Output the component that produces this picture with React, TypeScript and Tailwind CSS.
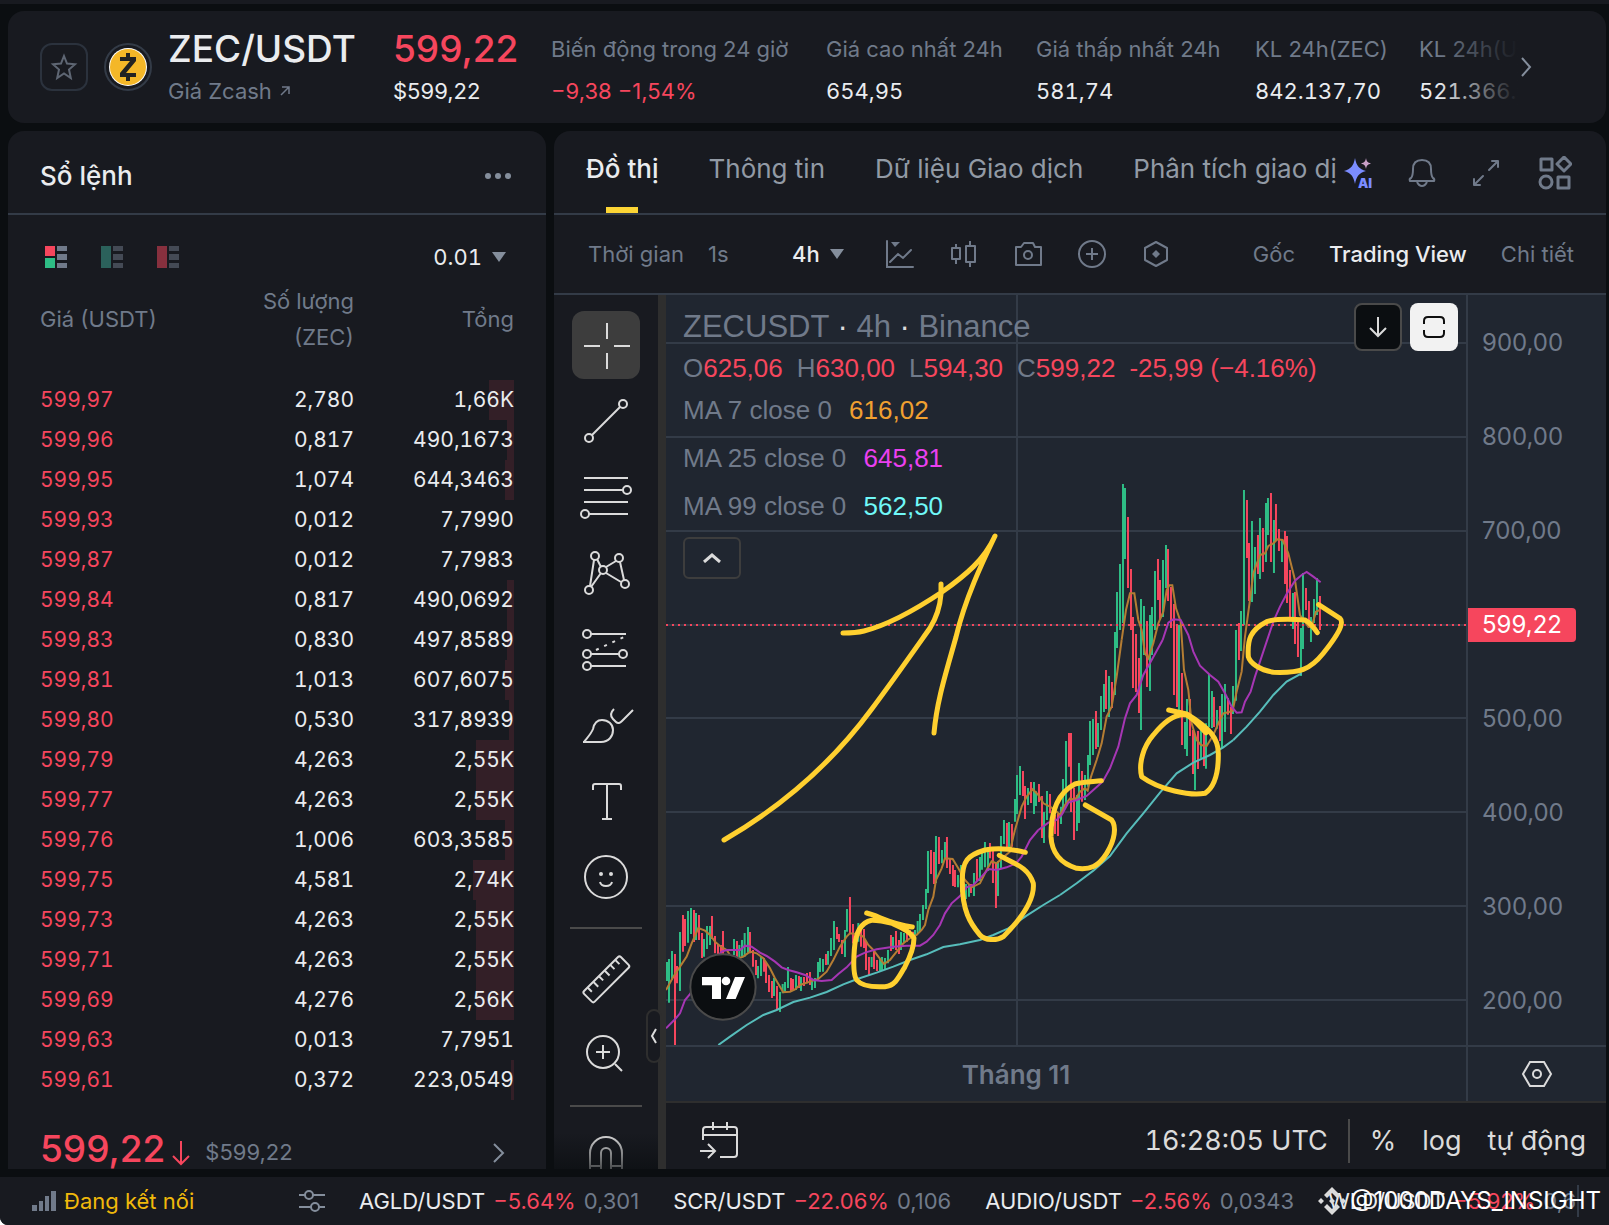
import type { ReactNode } from "react";
import clsx from "clsx";

const stats = [
  { label: "Biến động trong 24 giờ", value: "−9,38 −1,54%", down: true, width: "w-[275px]" },
  { label: "Giá cao nhất 24h", value: "654,95", width: "w-[210px]" },
  { label: "Giá thấp nhất 24h", value: "581,74", width: "w-[219px]" },
  { label: "KL 24h(ZEC)", value: "842.137,70", width: "w-[164px]" },
  { label: "KL 24h(USDT)", value: "521.366.034,20", width: "w-[180px]" },
];

// depth is the width of the red bar behind the total
const asks = [
  { price: "599,97", amount: "2,780", total: "1,66K", depth: 25 },
  { price: "599,96", amount: "0,817", total: "490,1673", depth: 7 },
  { price: "599,95", amount: "1,074", total: "644,3463", depth: 9 },
  { price: "599,93", amount: "0,012", total: "7,7990", depth: 0 },
  { price: "599,87", amount: "0,012", total: "7,7983", depth: 0 },
  { price: "599,84", amount: "0,817", total: "490,0692", depth: 7 },
  { price: "599,83", amount: "0,830", total: "497,8589", depth: 7 },
  { price: "599,81", amount: "1,013", total: "607,6075", depth: 9 },
  { price: "599,80", amount: "0,530", total: "317,8939", depth: 5 },
  { price: "599,79", amount: "4,263", total: "2,55K", depth: 38 },
  { price: "599,77", amount: "4,263", total: "2,55K", depth: 38 },
  { price: "599,76", amount: "1,006", total: "603,3585", depth: 9 },
  { price: "599,75", amount: "4,581", total: "2,74K", depth: 41 },
  { price: "599,73", amount: "4,263", total: "2,55K", depth: 38 },
  { price: "599,71", amount: "4,263", total: "2,55K", depth: 38 },
  { price: "599,69", amount: "4,276", total: "2,56K", depth: 38 },
  { price: "599,63", amount: "0,013", total: "7,7951", depth: 0 },
  { price: "599,61", amount: "0,372", total: "223,0549", depth: 3 },
];

const tickers = [
  { pair: "AGLD/USDT", change: "−5.64%", price: "0,301" },
  { pair: "SCR/USDT", change: "−22.06%", price: "0,106" },
  { pair: "AUDIO/USDT", change: "−2.56%", price: "0,0343" },
  { pair: "WLD/USDT", change: "−5.92%", price: "0,6" },
];

const priceTicks = ["900,00", "800,00", "700,00", "", "500,00", "400,00", "300,00", "200,00"];
const gridLines = [48, 142, 236, 330, 423, 517, 611, 705];

// Each section keeps its own origin; bars are [x, high, low] in thirds of a pixel.
const sections = [
  {
    transform: "translate(-6 505) scale(0.3333)",
    up: [
      [21, 486, 543], [27, 477, 608], [36, 453, 540], [60, 396, 573], [84, 333, 428], [93, 324, 402], [108, 339, 420],
      [132, 417, 470], [141, 378, 447], [150, 378, 435], [222, 417, 465], [238, 435, 480], [246, 420, 470],
      [254, 399, 470], [264, 381, 458], [294, 498, 535], [303, 471, 528], [342, 534, 588], [360, 576, 636],
      [368, 552, 580], [375, 546, 576], [384, 501, 564], [408, 525, 570], [423, 531, 573], [456, 540, 570],
      [465, 534, 564], [474, 486, 540], [480, 474, 516], [489, 477, 515], [504, 453, 494], [513, 414, 468],
      [522, 363, 450], [555, 390, 471], [561, 327, 395], [595, 369, 425], [635, 471, 501], [660, 477, 516],
      [666, 471, 510], [675, 474, 507], [684, 450, 490], [699, 411, 447], [723, 396, 450], [732, 399, 430],
      [765, 390, 410], [773, 363, 402], [780, 342, 396], [789, 315, 360], [798, 267, 327], [804, 153, 279],
      [828, 108, 249], [846, 150, 190], [855, 126, 178], [894, 225, 262], [903, 195, 275], [918, 252, 297],
      [927, 252, 290], [942, 219, 288], [960, 171, 243], [966, 150, 209], [975, 126, 202], [984, 141, 213],
      [1014, 183, 288], [1023, 108, 207], [1032, 60, 132], [1047, 66, 142],
    ],
    down: [
      [45, 462, 735], [51, 498, 550], [69, 345, 455], [75, 357, 438], [102, 330, 426], [117, 345, 420],
      [126, 399, 474], [156, 348, 417], [165, 408, 460], [174, 432, 465], [183, 435, 465], [189, 393, 465],
      [231, 423, 480], [270, 396, 460], [279, 450, 500], [288, 480, 525], [312, 474, 515], [318, 486, 549],
      [327, 525, 576], [336, 543, 594], [351, 558, 630], [393, 534, 573], [399, 537, 573], [417, 528, 564],
      [432, 531, 558], [441, 519, 550], [450, 516, 555], [498, 462, 495], [531, 381, 417], [537, 402, 426],
      [546, 420, 462], [570, 291, 402], [579, 372, 430], [588, 400, 430], [603, 375, 440], [612, 387, 444],
      [618, 423, 510], [627, 471, 525], [642, 447, 507], [651, 480, 513], [693, 405, 453], [708, 393, 450],
      [717, 420, 462], [741, 400, 425], [750, 390, 410], [759, 395, 425], [813, 150, 222], [822, 156, 252],
      [837, 111, 192], [861, 111, 204], [870, 177, 222], [879, 195, 258], [885, 210, 261], [912, 250, 285],
      [933, 252, 279], [951, 177, 243], [990, 129, 175], [999, 150, 249], [1008, 189, 324], [1041, 69, 141],
      [1056, 72, 140],
    ],
    ma7: "18,570 40,530 60,500 80,470 95,430 115,384 135,392 150,405 165,425 180,438 200,450 220,480 250,470 270,455 290,460 310,475 330,505 345,535 360,560 370,577 390,575 405,568 420,555 450,545 475,537 500,515 520,480 540,440 560,410 570,400 590,402 610,410 625,435 640,450 655,470 672,492 690,480 710,455 730,430 750,415 770,405 785,390 795,375 805,330 820,290 828,240 845,205 855,175 878,177 895,205 915,240 935,262 960,250 980,210 995,184 1010,190 1030,172 1050,155 1060,110 1065,90",
    ma25: "18,685 45,658 60,640 75,600 88,585 130,520 185,455 200,450 240,450 255,437 275,440 300,458 320,468 345,485 365,502 385,510 410,517 435,525 460,540 485,543 515,540 535,522 560,502 590,470 615,458 650,448 700,440 740,437 780,437 800,425 820,405 840,375 855,340 875,310 900,288 920,262 940,255 965,230 985,207 1010,210 1040,202 1068,190 1085,170 1110,120 1135,90",
    ma99: "175,735 210,710 260,675 310,645 350,630 400,606 450,593 500,576 550,553 590,538 650,518 700,500 750,480 800,463 850,441 900,433 960,420 1000,405 1045,385 1100,347 1150,315 1200,285",
  },
  {
    transform: "translate(294 345) scale(0.3333)",
    up: [
      [165, 477, 545], [171, 405, 522], [180, 378, 465], [204, 444, 495], [222, 426, 522], [228, 454, 498],
      [252, 516, 609], [261, 453, 540], [303, 500, 552], [309, 417, 520], [318, 303, 490], [351, 465, 573],
      [357, 369, 549], [375, 405, 480], [384, 345, 440], [390, 243, 375], [399, 237, 345], [414, 249, 321],
      [423, 168, 270], [432, 132, 216], [447, 108, 231],
    ],
    down: [
      [189, 393, 468], [195, 438, 537], [213, 426, 489], [237, 432, 486], [246, 468, 594], [270, 462, 520],
      [285, 525, 582], [294, 522, 588], [327, 279, 380], [333, 279, 516], [342, 443, 600], [366, 393, 485],
      [408, 213, 327], [438, 90, 207], [456, 126, 204],
    ],
    ma7: "165,570 175,535 185,500 200,470 218,448 235,465 250,490 270,500 285,510 300,525 315,495 330,475 345,480 360,455 375,445 383,452 393,410 410,360 425,310 440,230 455,200 470,110 485,0",
    ma25: "235,570 265,548 290,540 305,525 325,488 350,480 380,468 400,450 428,425 450,385 475,320 495,235 510,190 530,165 550,105 575,60 608,0",
    ma99: "300,765 350,730 400,692 450,648 500,580 550,520 600,458 650,400 700,368 750,345 790,322 820,300",
  },
  {
    transform: "translate(374 145) scale(0.3333)",
    up: [
      [225, 576, 765], [231, 456, 624], [240, 372, 570], [249, 132, 549], [255, 144, 357], [303, 477, 870],
      [312, 498, 645], [330, 525, 753], [336, 501, 645], [345, 393, 570], [369, 360, 531], [378, 315, 444],
      [417, 555, 822], [435, 846, 927], [441, 777, 948], [465, 882, 1050], [483, 860, 955], [498, 850, 986],
      [507, 702, 862], [516, 753, 864], [531, 810, 866], [546, 762, 924], [555, 732, 876], [579, 738, 822],
      [588, 570, 782], [603, 513, 633], [612, 150, 555], [636, 243, 486], [645, 321, 462], [660, 234, 417],
      [678, 189, 366], [684, 174, 285], [702, 240, 399], [726, 300, 366], [759, 459, 567], [783, 564, 708],
      [789, 399, 627], [813, 531, 606], [822, 477, 549], [831, 414, 525],
    ],
    down: [
      [264, 231, 444], [273, 387, 570], [279, 531, 744], [288, 582, 756], [297, 654, 819], [321, 543, 741],
      [354, 357, 480], [360, 420, 540], [384, 327, 483], [393, 441, 564], [402, 492, 765], [411, 555, 801],
      [426, 699, 915], [450, 777, 888], [459, 870, 1002], [474, 873, 987], [492, 867, 978], [522, 771, 861],
      [540, 798, 903], [564, 774, 824], [573, 800, 882], [597, 549, 660], [621, 180, 354], [627, 309, 483],
      [654, 285, 402], [669, 264, 396], [693, 159, 366], [708, 192, 300], [717, 267, 333], [735, 273, 432],
      [741, 288, 489], [750, 390, 534], [765, 456, 612], [774, 540, 651], [798, 444, 510], [807, 483, 564],
      [840, 468, 570],
    ],
    ma7: "245,600 258,510 270,460 283,460 295,540 305,570 315,640 325,655 340,610 355,550 370,515 380,450 388,436 397,436 408,505 422,545 432,690 445,750 455,850 470,900 483,915 500,918 520,885 535,850 550,820 565,817 578,812 590,755 605,695 615,590 630,480 640,400 660,345 675,340 685,318 700,310 712,298 728,300 745,340 765,420 780,525 795,545 805,560 815,560 828,515 840,510",
    ma25: "368,600 385,548 400,538 422,540 445,585 460,635 480,677 510,705 535,725 555,760 575,800 590,818 605,817 615,785 632,755 645,710 665,650 685,590 700,545 720,500 740,462 765,422 785,405 800,396 820,410 842,427",
    ma99: "580,900 620,860 660,815 700,765 740,725 785,700",
  },
];

const barPath = (bars: number[][]) => bars.map(([x, high, low]) => `M${x} ${high}V${low}`).join("");

function ToolIcon({ children }: { children: ReactNode }) {
  return (
    <svg viewBox="-28 -28 56 56" className="size-14" fill="none" stroke="#dbdbdb" strokeWidth="2">
      {children}
    </svg>
  );
}

const drawTools = [
  {
    name: "Crosshair",
    icon: <path d="M1 -22V-6M1 8V24M-22 1H-6M8 1H24" />,
  },
  {
    name: "Trend line",
    icon: (
      <>
        <circle cx="-17" cy="17" r="4" />
        <circle cx="17" cy="-17" r="4" />
        <path d="M-14 14 14 -14" />
      </>
    ),
  },
  {
    name: "Fib retracement",
    icon: (
      <>
        <path d="M-22 -19H22M-22 -7H17M-22 5H22M-17 17H22" />
        <circle cx="21" cy="-7" r="4" />
        <circle cx="-21" cy="17" r="4" />
      </>
    ),
  },
  {
    name: "Pattern",
    icon: (
      <>
        <circle cx="-11" cy="-17" r="4" />
        <circle cx="13" cy="-15" r="4" />
        <circle cx="-3" cy="-3" r="4" />
        <circle cx="19" cy="11" r="4" />
        <circle cx="-17" cy="17" r="4" />
        <path d="M-9 -14 -5 -6M0 -6 10 -12M14 -11 18 7M0 0 15 9M-5 0 -15 14M-12 -13 -16 13" />
      </>
    ),
  },
  {
    name: "Forecast",
    icon: (
      <>
        <circle cx="-19" cy="-15" r="4" />
        <circle cx="-19" cy="5" r="4" />
        <circle cx="17" cy="5" r="4" />
        <circle cx="-19" cy="17" r="4" />
        <path d="M-15 -15H20M-15 5H13M-15 17H20" />
        <path d="M-10 1 18 -12" strokeDasharray="3 6" />
      </>
    ),
  },
  {
    name: "Brush",
    icon: (
      <>
        <path d="M-23 17H-5C3 17 7 11 7 5C7 -1 2 -5 -4 -5C-9 -5 -12 -1 -13 4C-15 9 -19 13 -22 17Z" />
        <path d="M8 -16C4 -12 4 -9 7 -6L10 -3C12 -1 14 -2 16 -4L27 -15" />
      </>
    ),
  },
  {
    name: "Text",
    icon: <path d="M-13 -11V-15Q-13 -17 -11 -17H13Q15 -17 15 -15V-11M1 -17V18M-4 18H6" />,
  },
  {
    name: "Icons",
    icon: (
      <>
        <circle r="21" />
        <circle cx="-5" cy="-3" r="2" fill="#dbdbdb" stroke="none" />
        <circle cx="5" cy="-3" r="2" fill="#dbdbdb" stroke="none" />
        <path d="M-6 5Q-5 9 0 9Q5 9 6 5" />
      </>
    ),
    last: true,
  },
  {
    name: "Measure",
    icon: (
      <g transform="rotate(-45)">
        <rect x="-26" y="-7" width="52" height="15" rx="2" />
        <path d="M-19 -7V-1M-11 -7V0M-3 -7V-1M5 -7V0M13 -7V-1M20 -7V-1" />
      </g>
    ),
  },
  {
    name: "Zoom in",
    icon: (
      <>
        <circle cx="-3" cy="-3" r="16" />
        <path d="M-10 -3H4M-3 -10V4M9 9 16 16" />
      </>
    ),
    last: true,
  },
  {
    name: "Magnet",
    icon: <path d="M-16 20V-4A16 16 0 0 1 16 -4V20M-5 20V-4A5 5 0 0 1 5 -4V20M-16 9H-5M5 9H16" />,
  },
];

function PairHeader() {
  return (
    <header className="flex h-28 shrink-0 items-center overflow-hidden rounded-2xl bg-[#181a20] pl-8">
      <button aria-label="Favorite" className="flex size-12 shrink-0 items-center justify-center rounded-xl border-2 border-[#2b323d]">
        <svg viewBox="0 0 28 28" className="size-7" fill="none" stroke="#5e6673" strokeWidth="2">
          <path d="M14 3 17 10.500 25 11.300 19 16.500 20.800 25 14 20.500 7.200 25 9 16.500 3 11.300 11 10.500Z" />
        </svg>
      </button>
      <svg viewBox="0 0 48 48" className="ml-4 size-12 shrink-0">
        <circle cx="24" cy="24" r="23" fill="none" stroke="#333b47" strokeWidth="2" />
        <circle cx="24" cy="24" r="19" fill="#fff" />
        <circle cx="24" cy="24" r="18" fill="#f4b728" />
        <path d="M16 14H32V18L22 30H32V34H16V30L26 18H16ZM22 10H26V15H22ZM22 33H26V38H22Z" fill="#222" />
      </svg>
      <div className="ml-4 w-[225px] shrink-0 pt-1.5">
        <h1 className="text-[37px] leading-[42px] font-medium">ZEC/USDT</h1>
        <a href="#zcash" className="flex items-center gap-2 text-[22px] leading-[42px] text-[#707a8a]">
          Giá Zcash
          <svg viewBox="0 0 10 10" className="size-2.5" fill="none" stroke="#707a8a" strokeWidth="1.500">
            <path d="M1 9 9 1M2 1H9V8" />
          </svg>
        </a>
      </div>
      <div className="w-[158px] shrink-0 pt-1.5">
        <div className="text-[37px] leading-[42px] font-medium text-[#f6465d]">599,22</div>
        <div className="text-[22px] leading-[42px]">$599,22</div>
      </div>
      <div className="relative flex min-w-0 flex-1 overflow-hidden pt-1.5">
        {stats.map((s) => (
          <div key={s.label} className={clsx("shrink-0 text-[22px] leading-[42px] whitespace-nowrap", s.width)}>
            <div className="text-[#707a8a]">{s.label}</div>
            <div className={s.down ? "text-[#f6465d]" : "tabular-nums"}>{s.value}</div>
          </div>
        ))}
        <div className="absolute inset-y-0 right-0 w-20 bg-linear-to-l from-[#181a20] to-transparent" />
      </div>
      <button aria-label="Next" className="mr-[72px] shrink-0">
        <svg viewBox="0 0 16 24" className="h-6 w-4" fill="none" stroke="#848e9c" strokeWidth="2">
          <path d="M4 3 12 12 4 21" />
        </svg>
      </button>
    </header>
  );
}

function BookIcon({ top, bottom, dim }: { top: string; bottom: string; dim?: boolean }) {
  return (
    <svg viewBox="0 0 22 22" className={clsx("h-[22px] w-[22px]", dim && "opacity-50")}>
      <path d="M0 0H10V10H0Z" fill={top} />
      <path d="M0 12H10V22H0Z" fill={bottom} />
      {dim && <path d="M0 9H10V13H0Z" fill={top} />}
      <path d="M12 0H22V5H12ZM12 8H22V14H12ZM12 17H22V22H12Z" fill="#707a8a" />
    </svg>
  );
}

function OrderBook() {
  return (
    <section className="flex w-[538px] shrink-0 flex-col overflow-hidden rounded-t-2xl bg-[#181a20]">
      <div className="flex h-[84px] shrink-0 items-center justify-between border-b-2 border-[#333b47] px-8 pt-2">
        <h2 className="text-[26px] leading-8 font-medium">Sổ lệnh</h2>
        <button aria-label="More" className="pr-0.5">
          <svg viewBox="0 0 28 6" className="h-1.5 w-7" fill="#848e9c">
            <circle cx="4" cy="3" r="3" />
            <circle cx="14" cy="3" r="3" />
            <circle cx="24" cy="3" r="3" />
          </svg>
        </button>
      </div>
      <div className="flex h-[68px] shrink-0 items-center justify-between px-8 pt-4">
        <div className="flex gap-[34px] pl-[5px]">
          <button aria-label="Order book">
            <BookIcon top="#f6465d" bottom="#2ebd85" />
          </button>
          <button aria-label="Buy orders">
            <BookIcon top="#3fa796" bottom="#3fa796" dim />
          </button>
          <button aria-label="Sell orders">
            <BookIcon top="#f6465d" bottom="#f6465d" dim />
          </button>
        </div>
        <button className="flex items-center gap-2.5 pr-2 text-[22px] tabular-nums">
          0.01
          <svg viewBox="0 0 14 10" className="h-2.5 w-3.5" fill="#848e9c">
            <path d="M0 0H14L7 10Z" />
          </svg>
        </button>
      </div>
      <div className="mx-8 shrink-0">
        <table className="w-full table-fixed text-[22px] tabular-nums">
          <thead>
            <tr className="text-[#707a8a]">
              <th className="w-[160px] pb-[25px] text-left font-normal">Giá (USDT)</th>
              <th className="w-[154px] pb-[25px] text-right leading-9 font-normal">
                Số lượng
                <br />
                (ZEC)
              </th>
              <th className="pb-[25px] text-right font-normal">Tổng</th>
            </tr>
          </thead>
          <tbody className="text-[21px]">
            {asks.map((row) => (
              <tr key={row.price} className="h-10">
                <td className="p-0 text-[#f6465d]">{row.price}</td>
                <td className="p-0 text-right">{row.amount}</td>
                <td className="relative p-0 text-right">
                  <span className="absolute inset-y-0 right-0 bg-[#f6465d]/12" style={{ width: row.depth }} />
                  <span className="relative">{row.total}</span>
                </td>
              </tr>
            ))}
          </tbody>
        </table>
      </div>
      <div className="mt-7 flex items-center px-8">
        <span className="text-[37px] leading-[40px] font-medium text-[#f6465d]">599,22</span>
        <svg viewBox="0 0 20 26" className="mt-2 ml-1.5 h-[26px] w-5" fill="none" stroke="#f6465d" strokeWidth="2">
          <path d="M10 1V24M2 16 10 24 18 16" />
        </svg>
        <span className="mt-2 ml-3.5 text-[22px] text-[#707a8a]">$599,22</span>
        <button aria-label="More trades" className="mt-2 mr-2 ml-auto">
          <svg viewBox="0 0 14 22" className="h-[22px] w-3.5" fill="none" stroke="#848e9c" strokeWidth="2">
            <path d="M2 2 11 11 2 20" />
          </svg>
        </button>
      </div>
    </section>
  );
}

function Tabs() {
  const tabs = ["Đồ thị", "Thông tin", "Dữ liệu Giao dịch", "Phân tích giao dị"];
  return (
    <div className="flex h-[84px] shrink-0 border-b-2 border-[#333b47] pl-8">
      <nav className="flex min-w-0 flex-1 gap-[50px] overflow-hidden text-[26px] whitespace-nowrap">
        {tabs.map((tab, i) => (
          <a
            key={tab}
            href={`#tab-${i}`}
            className={clsx("relative pt-5 leading-9", i === 0 ? "font-medium" : "text-[#929aa5]")}
          >
            {tab}
            {i === 0 && <span className="absolute bottom-0 left-1/2 h-1.5 w-8 -translate-x-1/2 bg-[#fcd535]" />}
          </a>
        ))}
      </nav>
      <div className="flex shrink-0 items-center pt-0.5 pr-[34px]">
        <button aria-label="AI">
          <svg viewBox="0 0 32 32" className="size-8">
            <path d="M13 1C14.500 9 17 12 24 14C17 16 14.500 19 13 27C11.500 19 9 16 2 14C9 12 11.500 9 13 1Z" fill="#7b8cff" />
            <path d="M24 1C24.700 4.500 25.500 5.500 29 6.500C25.500 7.500 24.700 8.500 24 12C23.300 8.500 22.500 7.500 19 6.500C22.500 5.500 23.300 4.500 24 1Z" fill="#c9a0c8" />
            <text x="16" y="31" fill="#7b8cff" className="font-['Inter'] text-[13px] font-black">
              AI
            </text>
          </svg>
        </button>
        <button aria-label="Alerts" className="ml-8">
          <svg viewBox="0 0 32 32" className="size-8" fill="none" stroke="#707a8a" strokeWidth="2" strokeLinejoin="round">
            <path d="M4 24Q3 22 5 21Q7 19 7 12C7 6 10 3 16 3S25 6 25 12Q25 19 27 21Q29 22 28 24ZM11 25Q13 29 16 29T21 25" />
          </svg>
        </button>
        <button aria-label="Expand" className="ml-8">
          <svg
            viewBox="0 0 32 32"
            className="size-8"
            fill="none"
            stroke="#707a8a"
            strokeWidth="2"
            strokeLinecap="round"
            strokeLinejoin="round"
          >
            <path d="M19 13 28 4M22 4H28V10M13 19 4 28M4 22V28H10" />
          </svg>
        </button>
        <button aria-label="Layout" className="ml-9">
          <svg viewBox="0 0 34 34" className="size-[34px]" fill="none" stroke="#707a8a" strokeWidth="3" strokeLinejoin="round">
            <path d="M3 3H14V14H3ZM20 21H31V32H20ZM26 1 33 8 26 15 19 8Z" />
            <circle cx="8" cy="26" r="6" />
          </svg>
        </button>
      </div>
    </div>
  );
}

function ChartToolbar() {
  return (
    <div className="flex h-20 shrink-0 items-center border-b-2 border-[#333b47] pr-8 pl-[34px] text-[22px] whitespace-nowrap text-[#707a8a]">
      <span className="w-[120px]">Thời gian</span>
      <button className="w-[84px] text-left">1s</button>
      <button className="flex w-[92px] items-center gap-2.5 font-medium text-[#eaecef]">
        4h
        <svg viewBox="0 0 14 10" className="h-2.5 w-3.5" fill="#848e9c">
          <path d="M0 0H14L7 10Z" />
        </svg>
      </button>
      <div className="flex gap-8">
        <button aria-label="Indicators">
          <svg viewBox="0 0 32 32" className="size-8" fill="none" stroke="#707a8a" strokeWidth="2" strokeLinecap="round">
            <path d="M3 3V29H29M6 24 14 16 19 20 27 12" />
            <path d="M7 4H16L11 9Z" fill="#707a8a" stroke="none" />
          </svg>
        </button>
        <button aria-label="Chart type">
          <svg viewBox="0 0 32 32" className="size-8" fill="none" stroke="#707a8a" strokeWidth="2" strokeLinejoin="round">
            <path d="M4 10H12V21H4ZM18 8H27V24H18ZM8 6V10M8 21V26M22 3V8M22 24V29" />
          </svg>
        </button>
        <button aria-label="Screenshot">
          <svg viewBox="0 0 32 32" className="size-8" fill="none" stroke="#707a8a" strokeWidth="2" strokeLinejoin="round">
            <path d="M4 9H9L12 5H21L23 9H29V27H4Z" />
            <circle cx="16" cy="17" r="4" />
          </svg>
        </button>
        <button aria-label="Add">
          <svg viewBox="0 0 32 32" className="size-8" fill="none" stroke="#707a8a" strokeWidth="2">
            <circle cx="16" cy="16" r="13" />
            <path d="M16 10V22M10 16H22" />
          </svg>
        </button>
        <button aria-label="Settings">
          <svg viewBox="0 0 32 32" className="size-8" fill="none" stroke="#707a8a" strokeWidth="2" strokeLinejoin="round">
            <path d="M16 4 27 10V22L16 28 5 22V10Z" />
            <path d="M16 12 20 16 16 20 12 16Z" fill="#707a8a" stroke="none" />
          </svg>
        </button>
      </div>
      <div className="ml-auto flex gap-[34px]">
        <button>Gốc</button>
        <button className="font-medium text-[#eaecef]">Trading View</button>
        <button>Chi tiết</button>
      </div>
    </div>
  );
}

function ToolRail() {
  return (
    <div className="relative w-28 shrink-0 border-r-8 border-[#2e2e2e]">
      <div className="absolute inset-0 flex flex-col items-center gap-2 overflow-hidden pt-4">
        {drawTools.map((tool, i) => (
          <div key={tool.name} className="flex flex-col items-center gap-4">
            <button
              aria-label={tool.name}
              className={clsx("flex size-[68px] items-center justify-center rounded-xl", i === 0 && "bg-[#3d3d3d]")}
            >
              <ToolIcon>{tool.icon}</ToolIcon>
            </button>
            {tool.last && <div className="mb-2 h-0.5 w-[72px] bg-[#4a4a4a]" />}
          </div>
        ))}
      </div>
      <div className="absolute inset-x-0 bottom-0 h-9 bg-linear-to-t from-[#0b0e11]/70 to-transparent" />
      <button
        aria-label="Hide toolbar"
        className="absolute -right-1 bottom-[106px] flex h-[54px] w-4 items-center justify-center rounded-lg border-2 border-[#2e2e2e] bg-[#181a20]"
      >
        <svg viewBox="0 0 8 16" className="h-4 w-2" fill="none" stroke="#dbdbdb" strokeWidth="2">
          <path d="M6 1 2 8 6 15" />
        </svg>
      </button>
    </div>
  );
}

function ChartPlot() {
  return (
    <svg viewBox="0 0 800 750" preserveAspectRatio="none" className="absolute inset-0 h-full w-full" fill="none">
      <g stroke="#333b47" strokeWidth="2">
        {gridLines.map((y) => (
          <path key={y} d={`M0 ${y}H800`} />
        ))}
        <path d="M351 0V750" />
      </g>
      {sections.map((s) => (
        <g key={s.transform} transform={s.transform}>
          <path d={barPath(s.up)} stroke="#2ebd85" strokeWidth="6" />
          <path d={barPath(s.down)} stroke="#f6465d" strokeWidth="6" />
        </g>
      ))}
      {sections.map((s) => (
        <g key={s.transform} transform={s.transform} strokeWidth="6">
          <polyline points={s.ma7} stroke="#b57d33" />
          <polyline points={s.ma25} stroke="#a636b4" />
          <polyline points={s.ma99} stroke="#57bdbb" />
        </g>
      ))}
      <path d="M0 330H800" stroke="#f6465d" strokeWidth="2" strokeDasharray="2 4" />
      <g stroke="#ffd02f" strokeLinecap="round" strokeLinejoin="round">
        <path
          d="M177 338Q190 338 198 336C222 330 252 313 276 297C300 280 318 265 329 241C316 268 299 304 290 342C280 378 271 405 268 438M275 289V299C274 312 269 325 264 333C247 357 226 387 205 415C165 469 115 512 58 545"
          strokeWidth="5"
        />
        <g transform={sections[0].transform} strokeWidth="15">
          <path d="M620 339C655 347 690 372 757 381C720 378 670 360 635 361C600 368 586 400 583 450C580 490 580 525 590 540C605 558 640 562 675 560C705 557 715 535 735 500C752 468 762 440 762 415C755 398 730 385 700 372" />
          <path d="M1018 166C1060 190 1105 200 1120 250C1125 300 1080 360 1030 410C1010 423 975 422 960 405C930 370 907 330 907 250C905 180 925 165 975 150C1020 142 1060 148 1096 157" />
        </g>
        <g transform={sections[1].transform} strokeWidth="15">
          <path d="M376 495 455 540C470 560 465 600 440 640C415 680 390 690 350 685C300 670 275 635 273 590C272 500 300 455 345 432C370 425 400 425 424 422" />
          <path d="M626 210 680 222C750 265 775 295 775 340C776 400 765 440 735 460C690 468 600 450 545 410C535 370 550 320 580 285C620 235 650 220 680 225C700 235 720 260 738 278" />
        </g>
        <g transform={sections[2].transform} strokeWidth="15">
          <path d="M836 494 900 535C915 550 890 590 850 640C810 690 780 700 700 697C660 690 630 670 625 650C622 600 630 570 680 545C710 535 750 537 795 540C810 548 820 560 832 578" />
        </g>
      </g>
      <g transform={sections[0].transform}>
        <circle cx="189" cy="561" r="98" fill="#0b0e11" stroke="#4a4a4a" strokeWidth="6" />
        <path d="M126 531H183V597H156V556H126ZM225 531H255L227 597H198Z" fill="#fff" />
        <circle cx="198" cy="543" r="13" fill="#fff" />
      </g>
    </svg>
  );
}

function Legend() {
  const ohlc = [
    ["O", "625,06"],
    ["H", "630,00"],
    ["L", "594,30"],
    ["C", "599,22"],
  ];
  return (
    <div className="absolute top-2 left-[17px] font-['Liberation_Sans',sans-serif] text-[26px] whitespace-nowrap text-[#707a8a]">
      <div className="text-[31px] leading-[47px]">
        ZECUSDT <span className="text-[#dbdbdb]">·</span> 4h <span className="text-[#dbdbdb]">·</span> Binance
      </div>
      <div className="flex gap-3.5 leading-[36px]">
        {ohlc.map(([k, v]) => (
          <span key={k}>
            {k}
            <span className="text-[#f6465d]">{v}</span>
          </span>
        ))}
        <span className="text-[#f6465d]">-25,99 (−4.16%)</span>
      </div>
      <div className="leading-[48px]">
        <div>
          MA 7 close 0 <span className="ml-2.5 text-[#f0a030]">616,02</span>
        </div>
        <div>
          MA 25 close 0 <span className="ml-2.5 text-[#eb40f0]">645,81</span>
        </div>
        <div>
          MA 99 close 0 <span className="ml-2.5 text-[#70f8f8]">562,50</span>
        </div>
      </div>
      <button
        aria-label="Collapse legend"
        className="mt-[7px] flex h-[42px] w-[58px] items-center justify-center rounded-md border-2 border-[#3d3d3d]"
      >
        <svg viewBox="0 0 18 10" className="h-2.5 w-[18px]" fill="none" stroke="#dbdbdb" strokeWidth="3">
          <path d="M1 9 9 2 17 9" />
        </svg>
      </button>
    </div>
  );
}

function Chart() {
  return (
    <div className="flex min-w-0 flex-1 flex-col">
      <div className="flex min-h-0 flex-1 bg-[#202630]">
        <div className="relative min-w-0 flex-1">
          <ChartPlot />
          <Legend />
          <div className="absolute top-2 right-2 flex gap-2">
            <button
              aria-label="Scroll to latest"
              className="flex size-12 items-center justify-center rounded-lg border-2 border-[#4a4a4a] bg-[#0b0e11]"
            >
              <svg viewBox="0 0 20 22" className="h-[22px] w-5" fill="none" stroke="#dbdbdb" strokeWidth="2">
                <path d="M10 1V20M2 12 10 20 18 12" />
              </svg>
            </button>
            <button aria-label="Fullscreen" className="flex size-12 items-center justify-center rounded-lg bg-[#f2f2f2]">
              <svg viewBox="0 0 24 24" className="size-6" fill="none" stroke="#0f0f0f" strokeWidth="2">
                <path d="M2 9V6Q2 2 6 2H18Q22 2 22 6V9M2 15V18Q2 22 6 22H18Q22 22 22 18V15" />
              </svg>
            </button>
          </div>
        </div>
        <div className="flex w-[140px] shrink-0 flex-col border-l-2 border-[#333b47] pt-px text-[24px]">
          {priceTicks.map((tick, i) => (
            <div key={i} className="flex h-[94px] shrink-0 items-center pl-3.5 text-[#707a8a]">
              {tick || (
                <span className="-ml-3.5 rounded-r bg-[#f6465d] px-3.5 leading-[34px] text-white">599,22</span>
              )}
            </div>
          ))}
        </div>
      </div>
      <div className="flex h-[58px] shrink-0 border-y-2 border-[#333b47] border-b-[#2e2e2e] bg-[#202630]">
        <div className="flex min-w-0 flex-1 items-center text-[26px] font-semibold text-[#707a8a]">
          <span className="w-7/8 text-center">Tháng 11</span>
        </div>
        <div className="flex w-[140px] shrink-0 items-center justify-center border-l-2 border-[#333b47]">
          <button aria-label="Axis settings">
            <svg viewBox="0 0 32 28" className="h-7 w-8" fill="none" stroke="#dbdbdb" strokeWidth="2">
              <path d="M9 2H23L30 14 23 26H9L2 14Z" />
              <circle cx="16" cy="14" r="4" />
            </svg>
          </button>
        </div>
      </div>
      <div className="flex h-[66px] shrink-0 items-center pt-2.5 pr-5 pl-8 text-[27px] whitespace-nowrap text-[#dbdbdb]">
        <button aria-label="Go to date">
          <svg viewBox="0 0 40 40" className="size-10" fill="none" stroke="#dbdbdb" strokeWidth="2">
            <path d="M5 19V9Q5 6 8 6H36Q39 6 39 9V33Q39 36 36 36H22M5 14H39M15 1V9M29 1V9M2 30H17M10 23 17 30 10 37" />
          </svg>
        </button>
        <span className="ml-auto tabular-nums">16:28:05 UTC</span>
        <span className="mx-5 h-11 w-0.5 bg-[#4a4a4a]" />
        <button>%</button>
        <button className="ml-[26px]">log</button>
        <button className="ml-[26px]">tự động</button>
      </div>
    </div>
  );
}

function StatusBar() {
  return (
    <footer className="relative flex h-12 shrink-0 items-center overflow-hidden bg-[#181a20] pl-8 text-[22px] whitespace-nowrap">
      <svg viewBox="0 0 24 20" className="h-5 w-6 shrink-0" fill="#707a8a">
        <path d="M0 14H5V20H0ZM7 10H11V20H7ZM13 5H17V20H13ZM19 0H24V20H19Z" />
      </svg>
      <span className="ml-2 w-[235px] shrink-0 text-[#f0b90b]">Đang kết nối</span>
      <button aria-label="Ticker settings" className="mr-[34px] shrink-0">
        <svg viewBox="0 0 26 24" className="h-6 w-[26px]" fill="none" stroke="#848e9c" strokeWidth="2">
          <path d="M0 6H6M14 6H26M0 18H12M20 18H26" />
          <circle cx="10" cy="6" r="4" />
          <circle cx="16" cy="18" r="4" />
        </svg>
      </button>
      <div className="flex min-w-0 gap-[34px]">
        {tickers.map((t) => (
          <a key={t.pair} href={`#${t.pair}`} className="flex gap-2">
            <span>{t.pair}</span>
            <span className="text-[#f6465d]">{t.change}</span>
            <span className="text-[#707a8a]">{t.price}</span>
          </a>
        ))}
      </div>
      <span className="absolute right-[30px] h-8 w-0.5 bg-[#333b47]" />
      <div className="absolute right-2 flex items-center gap-1 text-[24px] text-white">
        <svg viewBox="0 0 28 28" className="size-7" fill="#dbdbdb">
          <path d="M14 0 22 8 19 11 14 6 9 11 6 8ZM3 11 6 14 3 17 0 14ZM25 11 28 14 25 17 22 14ZM14 11 17 14 14 17 11 14ZM9 17 14 22 19 17 22 20 14 28 6 20Z" />
        </svg>
        @1000DAYS_INSIGHT
      </div>
    </footer>
  );
}

export default function App() {
  return (
    <div className="flex h-screen min-h-[600px] flex-col gap-2 overflow-hidden rounded-bl-lg bg-[#0b0e11] font-['Inter','Noto_Sans',sans-serif] text-[#eaecef]">
      <div className="-mb-px h-1 shrink-0 bg-[#181a20]" />
      <div className="flex min-h-0 flex-1 flex-col gap-2 pr-[3px] pl-2">
        <PairHeader />
        <main className="flex min-h-0 flex-1 gap-2">
          <OrderBook />
          <section className="flex min-w-0 flex-1 flex-col overflow-hidden rounded-t-2xl bg-[#181a20]">
            <Tabs />
            <ChartToolbar />
            <div className="flex min-h-0 flex-1">
              <ToolRail />
              <Chart />
            </div>
          </section>
        </main>
      </div>
      <StatusBar />
    </div>
  );
}
